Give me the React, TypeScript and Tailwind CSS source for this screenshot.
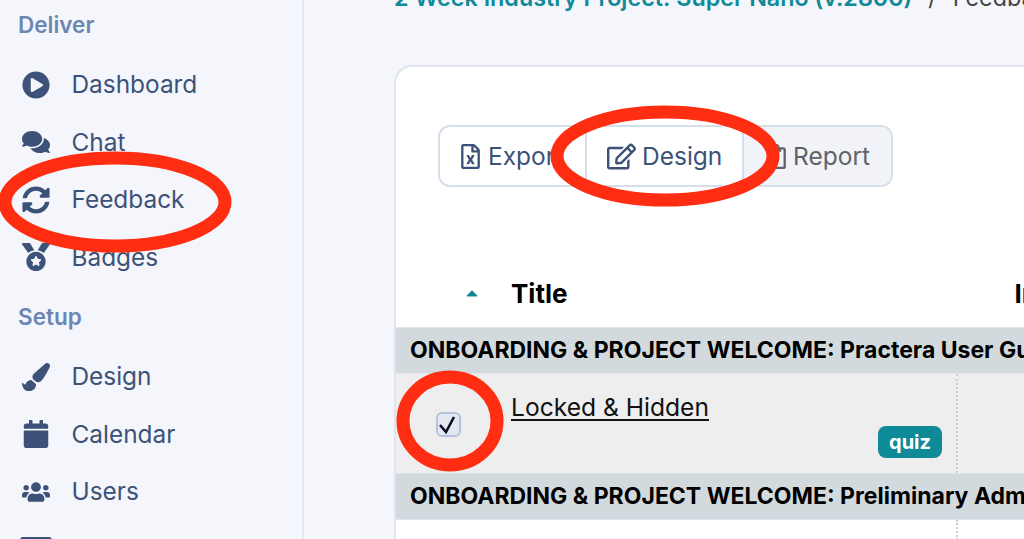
import { FaCalendar, FaComments, FaEnvelope, FaPaintBrush, FaPlayCircle, FaRegEdit, FaRegFileExcel, FaSyncAlt, FaUsers, FaMedal, FaRegClipboard, FaCaretUp } from 'react-icons/fa'
import type { ReactNode } from 'react'

function NavItem({ icon, label }: { icon: ReactNode; label: string }) {
    return (
        <div className="flex h-[57.5px] items-center text-[#3d5278]">
            <div className="flex w-[36px] justify-center text-[28px]">{icon}</div>
            <span className="ml-[17.5px] text-[24.4px]">{label}</span>
        </div>
    )
}

function SectionRow({ title }: { title: string }) {
    return (
        <div className="flex h-[47px] items-center overflow-hidden whitespace-nowrap border-y border-[#dfe4ee] bg-[#d3dadd] pl-[14px] text-[23px] font-bold text-black">
            {title}
        </div>
    )
}

export default function App() {
    return (
        <div className="relative flex h-[539px] w-[1024px] overflow-hidden bg-[#f4f6fb] font-['Inter',sans-serif]">
            {/* Sidebar */}
            <aside className="h-full w-[304px] shrink-0 border-r-2 border-[#e3e7f1] pl-[18px]">
                <div className="mt-[8px] h-[30px] text-[22.5px] font-semibold text-[#6c86b3]">Deliver</div>
                <div className="mt-[18px]">
                    <NavItem icon={<FaPlayCircle />} label="Dashboard" />
                    <NavItem icon={<FaComments />} label="Chat" />
                    <NavItem icon={<FaSyncAlt />} label="Feedback" />
                    <NavItem icon={<FaMedal />} label="Badges" />
                </div>
                <div className="mt-[14px] h-[30px] text-[22.5px] font-semibold text-[#6c86b3]">Setup</div>
                <div className="mt-[18px]">
                    <NavItem icon={<FaPaintBrush />} label="Design" />
                    <NavItem icon={<FaCalendar />} label="Calendar" />
                    <NavItem icon={<FaUsers />} label="Users" />
                    <NavItem icon={<FaEnvelope className="text-[32px]" />} label="Mailing list" />
                </div>
            </aside>

            {/* Main */}
            <main className="min-w-0 flex-1 pl-[90px]">
                <div className="-mt-[12px] flex h-[20px] items-center whitespace-nowrap text-[23.3px] font-semibold text-[#0e8a98]">
                    2 Week Industry Project: Super Nano (v.2800)
                    <span className="mx-[16px] font-normal text-[#444]">/</span>
                    <span className="font-normal text-[#444]">Feedback</span>
                </div>

                <section className="mt-[57px] h-[600px] w-[800px] rounded-tl-[18px] border-2 border-[#dfe4ee] bg-white">
                    {/* Button group */}
                    <div className="ml-[42px] mt-[58px] flex h-[62px] w-[455px] overflow-hidden rounded-[12px] border-2 border-[#d7deeb] text-[24.5px]">
                        <div className="flex w-[145px] shrink-0 items-center gap-[5px] pl-[18px] text-[#3d5278]">
                            <FaRegFileExcel className="shrink-0 text-[25px]" />
                            Export
                        </div>
                        <div className="flex w-[159px] shrink-0 items-center gap-[6px] border-x-2 border-[#d7deeb] pl-[20px] text-[#3d5278]">
                            <FaRegEdit className="shrink-0 text-[29px]" />
                            Design
                        </div>
                        <div className="flex flex-1 items-center gap-[4px] bg-[#f1f3f8] pl-[20px] text-[#5f6368]">
                            <FaRegClipboard className="shrink-0 text-[25px]" />
                            Report
                        </div>
                    </div>

                    {/* Table header */}
                    <div className="mb-[4px] mt-[76px] flex h-[60px] items-center whitespace-nowrap text-[26px] font-bold text-black">
                        <FaCaretUp className="ml-[67px] shrink-0 text-[18px] text-[#0e8a98]" />
                        <span className="ml-[30px]">Title</span>
                        <span className="ml-[447px]">Instructions</span>
                    </div>

                    <SectionRow title="ONBOARDING & PROJECT WELCOME: Practera User Guide" />
                    <div className="flex h-[99px] bg-[#eeeeee]">
                        <div className="flex w-[115px] shrink-0 items-center pl-[40px] pt-[2px]">
                            <span className="h-[25px] w-[25px] rounded-[6px] border-2 border-[#b4c2db] bg-[#e3e8f2]">
                                <svg viewBox="0 0 21 21" className="h-[21px] w-[21px] overflow-visible" fill="none" stroke="#0b1020" strokeWidth="2.6">
                                    <path d="M2 11 L8 18 L16 3" />
                                </svg>
                            </span>
                        </div>
                        <div className="relative w-[447px] border-r-2 border-dotted border-[#cfcfcf]">
                            <div className="mt-[15px] text-[24.6px] text-[#111] underline underline-offset-[3px]">Locked &amp; Hidden</div>
                            <span className="absolute bottom-[15px] right-[14px] rounded-[8px] bg-[#0e8a98] px-[11px] py-[3px] text-[20px] font-bold leading-[26px] text-white">quiz</span>
                        </div>
                    </div>
                    <SectionRow title="ONBOARDING & PROJECT WELCOME: Preliminary Admin" />
                    <div className="h-[20px] w-[562px] border-r-2 border-dotted border-[#cfcfcf]" />
                </section>
            </main>

            {/* Red annotation marks drawn over the screenshot */}
            <svg className="absolute left-0 top-0 h-[539px] w-[1024px]" viewBox="0 0 1024 539" fill="none" stroke="#ff2d12" strokeWidth="13">
                <ellipse cx="115" cy="202" rx="110" ry="44" />
                <ellipse cx="665" cy="156" rx="108" ry="44" />
                <ellipse cx="450" cy="421" rx="47" ry="44" />
            </svg>
        </div>
    )
}
